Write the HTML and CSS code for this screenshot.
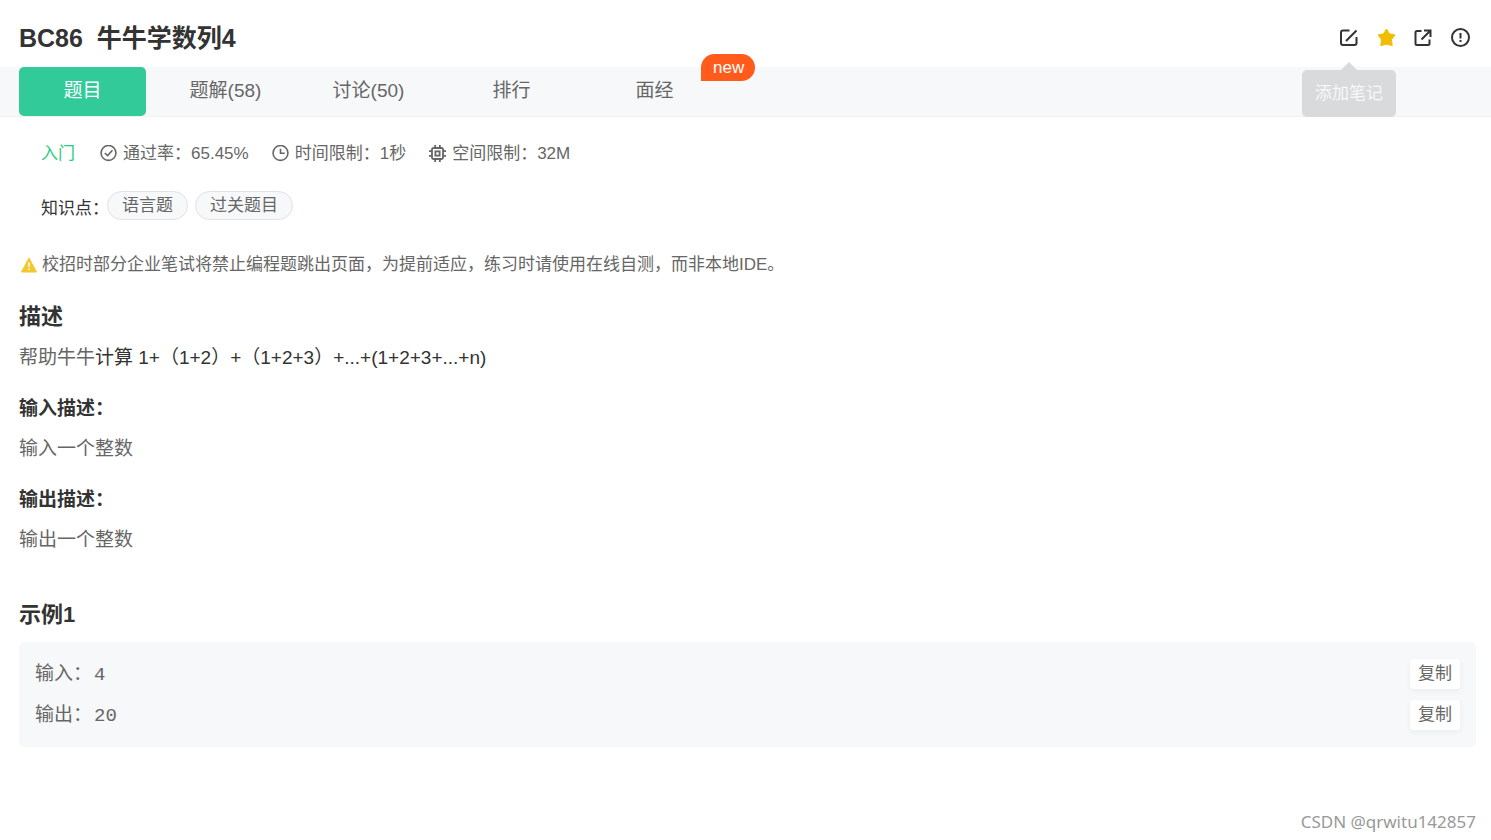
FILE: index.html
```html
<!DOCTYPE html>
<html lang="zh-CN">
<head>
<meta charset="utf-8">
<title>BC86 牛牛学数列4</title>
<link rel="stylesheet" href="styles.css">
</head>
<body>
<header class="header">
  <h1 class="title">BC86&nbsp; 牛牛学数列4</h1>
  <div class="actions">
    <div class="action-wrap">
      <button class="action" type="button" aria-label="添加笔记" aria-describedby="note-tip">
        <svg viewBox="0 0 20 20" fill="none" stroke="#333" stroke-width="2"><path d="M10.500 2.500H4Q2 2.500 2 4.500V15Q2 17 4 17H15.500Q17.500 17 17.500 15V9M7 13 17.500 2.500"/></svg>
      </button>
      <div class="tooltip" id="note-tip" role="tooltip">添加笔记</div>
    </div>
    <button class="action" type="button" aria-label="收藏">
      <svg viewBox="0 0 20 20" fill="#f0be00" stroke="#f0be00" stroke-width="1" stroke-linejoin="round"><path d="M10.500 1 13.300 5.700 19 7 15.500 11.500 16.200 17.500 10.500 16.200 4.800 17.500 5.500 11.500 2 7 7.700 5.700Z"/></svg>
    </button>
    <button class="action" type="button" aria-label="分享">
      <svg viewBox="0 0 20 20" fill="none" stroke="#333" stroke-width="2"><path d="M8.500 3H4Q2.500 3 2.500 4.500V15.500Q2.500 17 4 17H15Q16.500 17 16.500 15.500V11.500M11 2.500H17.500V9M17 3 8.500 11.500"/></svg>
    </button>
    <button class="action" type="button" aria-label="反馈">
      <svg viewBox="0 0 20 20" fill="none" stroke="#333" stroke-width="2"><circle cx="10.500" cy="9.500" r="8.500"/><path d="M10.500 5V10.500M10.500 12V14"/></svg>
    </button>
  </div>
</header>

<nav class="tabs">
  <a class="tab tab-active" href="#problem" aria-current="page">题目</a>
  <a class="tab" href="#solutions">题解(58)</a>
  <a class="tab" href="#discuss">讨论(50)</a>
  <a class="tab" href="#rank">排行</a>
  <a class="tab" href="#interview">面经<span class="badge">new</span></a>
</nav>

<main class="content" id="problem">
  <div class="meta">
    <span class="level">入门</span>
    <span class="meta-item">
      <svg class="meta-icon" viewBox="0 0 16 16" fill="none" stroke="#666" stroke-width="1.500"><circle cx="8" cy="7.500" r="7"/><path d="M4.500 7.500 7.200 10 11.700 5"/></svg>
      通过率：65.45%
    </span>
    <span class="meta-item">
      <svg class="meta-icon" viewBox="0 0 16 16" fill="none" stroke="#666" stroke-width="1.500"><circle cx="8" cy="7.500" r="7"/><path d="M8 3.500V7.800H12"/></svg>
      时间限制：1秒
    </span>
    <span class="meta-item">
      <svg class="meta-icon" viewBox="0 0 16 16" fill="none" stroke="#666" stroke-width="1.700"><rect x="2.800" y="2.800" width="10.400" height="10.400" rx="1.500"/><rect x="6" y="6" width="4" height="4"/><path d="M5.800 0V3M10.200 0V3M5.800 13V16M10.200 13V16M0 5.800H3M0 10.200H3M13 5.800H16M13 10.200H16"/></svg>
      空间限制：32M
    </span>
  </div>

  <div class="topics">
    <span class="topics-label">知识点：</span>
    <a class="tag" href="#language">语言题</a>
    <a class="tag" href="#pass">过关题目</a>
  </div>

  <p class="notice">
    <svg class="notice-icon" viewBox="0 0 16 16"><path d="M8 1 15.500 15H.5Z" fill="#f3c82d" stroke="#f3c82d" stroke-linejoin="round"/><path d="M8 5.500V10M8 11.500V13" stroke="#fff" stroke-width="1.500"/></svg>
    校招时部分企业笔试将禁止编程题跳出页面，为提前适应，练习时请使用在线自测，而非本地IDE。
  </p>

  <h2 class="heading">描述</h2>
  <p class="text">帮助牛牛<span class="formula">计算 1+（1+2）+（1+2+3）+...+(1+2+3+...+n)</span></p>
  <h3 class="subheading">输入描述：</h3>
  <p class="text">输入一个整数</p>
  <h3 class="subheading">输出描述：</h3>
  <p class="text">输出一个整数</p>

  <h2 class="heading example-heading">示例1</h2>
  <div class="example">
    <div class="example-row">
      <span>输入：<code class="value">4</code></span>
      <button class="copy" type="button">复制</button>
    </div>
    <div class="example-row">
      <span>输出：<code class="value">20</code></span>
      <button class="copy" type="button">复制</button>
    </div>
  </div>
</main>
<footer class="watermark">CSDN @qrwitu142857</footer>
</body>
</html>
```

FILE: styles.css
```css
* {
  box-sizing: border-box;
}

body {
  margin: 0;
  min-height: 100vh;
  display: flex;
  flex-direction: column;
  background: #fff;
  color: #666;
  font-family: "Liberation Sans", "Noto Sans CJK SC", sans-serif;
  font-size: 17px;
  line-height: 24px;
}

h1, h2, h3, p {
  margin: 0;
}

a {
  color: inherit;
  text-decoration: none;
}

button {
  border: 0;
  padding: 0;
  font: inherit;
  color: inherit;
  cursor: pointer;
}

svg {
  display: block;
  flex: none;
}

.header {
  display: flex;
  align-items: center;
  justify-content: space-between;
  padding: 20px 21px 11px 19px;
}

.title {
  color: #333;
  font-size: 25px;
  line-height: 36px;
}

.actions {
  display: flex;
  gap: 17px;
}

.action-wrap {
  position: relative;
}

.action {
  display: block;
  width: 20px;
  height: 20px;
  background: none;
}

.tooltip {
  position: absolute;
  top: 42px;
  left: 50%;
  transform: translateX(-50%);
  padding: 12px 13px;
  border-radius: 5px;
  background: #d9dadc;
  color: #f7f8f9;
  line-height: 23px;
  white-space: nowrap;
}

.tooltip::before {
  content: "";
  position: absolute;
  left: 50%;
  bottom: 100%;
  transform: translateX(-50%);
  border: 8px solid transparent;
  border-top: 0;
  border-bottom-color: #d9dadc;
}

.tabs {
  display: flex;
  gap: 16px;
  padding-left: 19px;
  background: #f7f8f9;
  border-bottom: 1px solid #eff1f3;
}

.tab {
  position: relative;
  width: 127px;
  padding-bottom: 2px;
  border-radius: 5px;
  font-size: 19px;
  line-height: 47px;
  text-align: center;
}

.tab-active {
  background: #32ca99;
  color: #fff;
}

.badge {
  position: absolute;
  top: -13px;
  left: 110px;
  padding: 0 11px 0 12px;
  border-radius: 14px 14px 14px 0;
  background: #ff5b1c;
  color: #fff;
  font-size: 17px;
  line-height: 27px;
}

.content {
  padding: 25px 15px 24px 19px;
}

.meta {
  display: flex;
  gap: 23px;
  padding-left: 22px;
}

.level {
  margin-right: 2px;
  color: #25cc7c;
}

.meta-item {
  display: flex;
  align-items: center;
  gap: 6px;
}

.meta-icon {
  width: 17px;
  height: 17px;
  margin-bottom: 2px;
}

.topics {
  display: flex;
  gap: 7px;
  margin-top: 25px;
  padding-left: 22px;
}

.topics-label {
  color: #333;
  margin-right: -9px;
  padding-top: 6px;
}

.tag {
  align-self: flex-start;
  padding: 0 14px;
  border: 1px solid #dfe2e6;
  border-radius: 15px;
  background: #f7f8f9;
  line-height: 27px;
}

.notice {
  display: flex;
  align-items: center;
  gap: 5px;
  margin-top: 32px;
  padding-left: 2px;
}

.notice-icon {
  width: 16px;
  height: 16px;
}

.heading {
  margin-top: 24px;
  color: #333;
  font-size: 22px;
  line-height: 32px;
}

.text {
  margin-top: 10px;
  font-size: 19px;
  line-height: 29px;
}

.formula {
  color: #333;
}

.subheading {
  margin-top: 22px;
  color: #333;
  font-size: 19px;
  line-height: 30px;
}

.example-heading {
  margin-top: 45px;
}

.example {
  display: grid;
  gap: 11px;
  margin-top: 11px;
  padding: 17px 16px;
  border-radius: 5px;
  background: #f7f8f9;
}

.example-row {
  display: flex;
  align-items: center;
  justify-content: space-between;
  font-size: 19px;
  line-height: 30px;
}

.value {
  margin-left: 2px;
  font-family: "Liberation Mono", monospace;
  font-size: 19px;
  line-height: 1;
}

.copy {
  padding: 0 8px;
  border-radius: 3px;
  background: #fff;
  box-shadow: 0 2px 6px rgba(0, 0, 0, 0.05);
  font-size: 17px;
  line-height: 30px;
}

.watermark {
  margin-top: auto;
  padding: 0 15px 6px;
  color: #999;
  font-family: "Noto Sans", sans-serif;
  font-size: 17px;
  text-align: right;
}
```
